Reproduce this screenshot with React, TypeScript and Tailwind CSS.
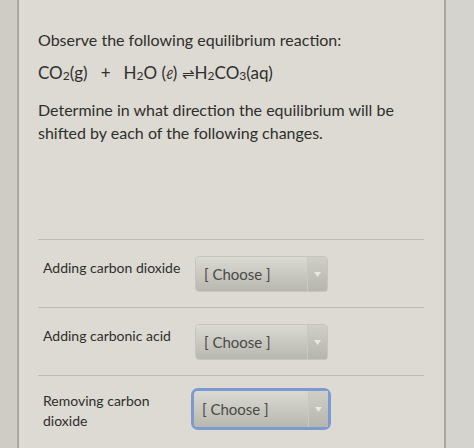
const rows = [
  { label: ["Adding carbon dioxide"], focused: false },
  { label: ["Adding carbonic acid"], focused: false },
  { label: ["Removing carbon", "dioxide"], focused: true },
];

const Sub = ({ children }: { children: React.ReactNode }) => (
  <sub className="relative top-[1px] text-[12px]">{children}</sub>
);

const ChooseSelect = ({ focused }: { focused: boolean }) => (
  <div
    className={
      focused
        ? "rounded-[7px] border-[3px] border-[#7b9bd0]"
        : "rounded-[4px] border border-[#c6c4bc]"
    }
  >
    <div
      className={
        focused
          ? "flex h-[36px] w-[134px] rounded-[4px] bg-gradient-to-b from-[#dad9d2] to-[#b8b7b0]"
          : "flex h-[34px] w-[131px] rounded-[3px] bg-gradient-to-b from-[#dad9d2] to-[#b8b7b0]"
      }
    >
      <div className="flex flex-1 items-center pl-[8px] text-[15px] text-[#4a4a48]">[ Choose ]</div>
      <div className="flex w-[20px] items-center justify-center border-l border-[#c9c8c1] bg-gradient-to-b from-[#cfcec7] to-[#b6b5ae]">
        <svg width="7" height="5" viewBox="0 0 7 5">
          <path d="M0 0 L7 0 L3.5 5 Z" fill="#e8e7e2" />
        </svg>
      </div>
    </div>
  </div>
);

export default function App() {
  return (
    <div
      className="flex h-[448px] w-[474px] overflow-hidden bg-[#d2d0ca] text-[#2f2f2d]"
      style={{ fontFamily: "Lato, 'Open Sans', sans-serif" }}
    >
      <div className="w-[17px] bg-[#ceccc5]" />
      <div className="flex w-[429px] flex-col border-x-2 border-[#a9a8a3] bg-[#dcdad2] pl-[19px] pr-[20px] pt-[29px]">
        <p className="text-[16px] leading-[22px]">Observe the following equilibrium reaction:</p>
        <p className="mt-[11px] text-[17px] leading-[22px]">
          CO<Sub>2</Sub>(g)&nbsp;&nbsp; +&nbsp;&nbsp; H<Sub>2</Sub>O (<i className="text-[13px]">ℓ</i>){" "}
          <span className="text-[15px]">⇌</span>H<Sub>2</Sub>CO<Sub>3</Sub>(aq)
        </p>
        <p className="mt-[13px] text-[16px] leading-[23px]">
          Determine in what direction the equilibrium will be shifted by each of the following changes.
        </p>

        <div className="mt-[95px] flex flex-col">
          {rows.map((row) => (
            <div key={row.label.join(" ")} className="flex flex-col">
              <div className="h-px w-[386px] bg-[#bcbab3]" />
              <div
                className={
                  row.focused
                    ? "flex items-start pl-[5px] pt-[12px] pb-[16px]"
                    : "flex items-start pl-[5px] pt-[16px] pb-[15px]"
                }
              >
                <span
                  className={
                    row.focused
                      ? "mt-[3px] w-[148px] text-[14px] leading-[20px]"
                      : "mt-[2px] w-[152px] whitespace-nowrap text-[14px] leading-[20px]"
                  }
                >
                  {row.label.map((line) => (
                    <span key={line} className="block">
                      {line}
                    </span>
                  ))}
                </span>
                <ChooseSelect focused={row.focused} />
              </div>
            </div>
          ))}
        </div>
      </div>
      <div className="flex-1 bg-[#d5d3cd]" />
    </div>
  );
}
